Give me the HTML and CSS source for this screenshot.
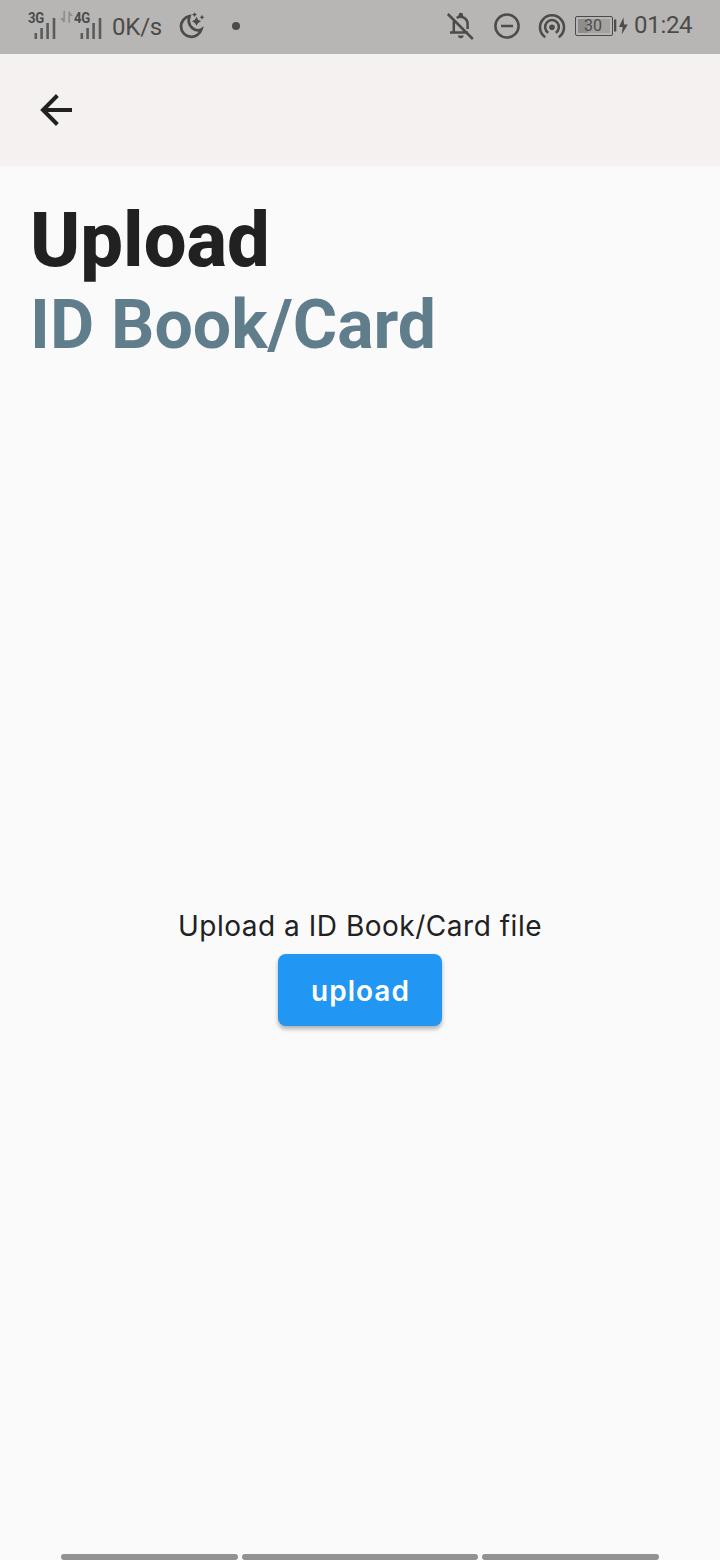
FILE: index.html
```html
<!DOCTYPE html>
<html lang="en">
<head>
<meta charset="utf-8">
<title>Upload ID Book/Card</title>
<link rel="stylesheet" href="styles.css">
</head>
<body>
<header class="status">
  <div class="status-group">
    <div class="signal signal-first">
      <span class="net">3G</span>
      <svg class="bars" width="22" height="24" viewBox="0 0 22 24"><path d="M1.8 17v6M7.6 12v11M13.6 7v16M20 2v21"/></svg>
    </div>
    <svg class="traffic" width="13" height="14" viewBox="0 0 13 14"><path d="M4.2 1v11M9.2 13V2"/><path class="solid" d="M0 8h4v5zM13 6H9V1z"/></svg>
    <div class="signal">
      <span class="net">4G</span>
      <svg class="bars" width="22" height="24" viewBox="0 0 22 24"><path d="M1.8 17v6M7.6 12v11M13.6 7v16M20 2v21"/></svg>
    </div>
    <span class="speed">0K/s</span>
    <svg class="moon" width="28" height="28" viewBox="0 0 28 28"><path class="line" d="M10.5 4.2A10.4 10.4 0 1 0 22.4 17.4C17 20.6 7.1 14.5 10.5 4.2Z"/><path class="solid" d="M17.5 4.8l1.6 2.9 3 1.6-3 1.6-1.6 2.9-1.6-2.9-3-1.6 3-1.6zM15.5.3l.9 1.5 1.6.8-1.6.8-.9 1.5-.9-1.5-1.6-.8 1.6-.8zM23 2.8l.9 1.7 1.6.8-1.6.8-.9 1.7-.9-1.7-1.6-.8 1.6-.8z"/></svg>
    <span class="dot"></span>
  </div>
  <div class="status-group">
    <svg class="bell" width="28" height="28" viewBox="0 0 28 28"><path class="line" d="M7.8 9.2v11.4H22M4 20.6h5M10.7 6C15 3 21.6 6 21.6 12v5M1.8 2l25 25"/><path class="solid" d="M12.5 4.6V3a2.3 2.3 0 0 1 4.6 0v1.6zM12 23.6h5.6a2.8 2.6 0 0 1-5.6 0z"/></svg>
    <svg class="dnd" width="26" height="26" viewBox="0 0 26 26"><circle class="line" cx="13" cy="13" r="11.6"/><path class="line" d="M7 13h12"/></svg>
    <svg class="hotspot" width="28" height="28" viewBox="0 0 28 28"><path class="line" d="M7.2 24.2A12 12 0 1 1 20.8 24.2M10.3 19.8a6.9 6.9 0 1 1 7.4 0"/><circle class="solid" cx="14" cy="14.2" r="2.8"/></svg>
    <div class="battery"><span>30</span></div>
    <svg class="bolt" width="14" height="20" viewBox="0 0 14 20"><path class="solid" d="M0 3.5h2.3v12H0zM9.5 1.5L5 11h3.7l-1 7.5L13.8 8.5H10z"/></svg>
    <span class="time">01:24</span>
  </div>
</header>
<nav class="appbar">
  <svg width="34" height="34" viewBox="0 0 34 34"><path d="M33 17H4M18.4 2.5L4 17 18.4 31.5"/></svg>
</nav>
<main class="page">
  <h1 class="title">Upload</h1>
  <h2 class="subtitle">ID Book/Card</h2>
  <section class="upload">
    <p class="prompt">Upload a ID Book/Card file</p>
    <button class="button">upload</button>
  </section>
</main>
<footer class="navhint"><i></i><i></i><i></i></footer>
</body>
</html>
```
FILE: styles.css
```css
* { box-sizing: border-box; }
body {
  margin: 0;
  width: 720px;
  height: 1560px;
  display: flex;
  flex-direction: column;
  overflow: hidden;
  background: #fafafa;
  color: #212121;
  font-family: Roboto, sans-serif;
}
svg { display: block; flex: none; }
.status {
  height: 54px;
  padding: 0 28px;
  display: flex;
  justify-content: space-between;
  background: #b7b6b4;
  color: #4c4b4b;
}
.status-group { display: flex; align-items: center; height: 52px; }
.line { fill: none; stroke: #4c4b4b; stroke-width: 2.5; }
.moon .line { stroke-width: 2.8; }
.solid { fill: #4c4b4b; }
.signal { width: 28px; height: 28px; display: grid; }
.net {
  grid-area: 1 / 1;
  font: 700 15.5px/15px Roboto, sans-serif;
  letter-spacing: -0.5px;
  transform: scaleX(.85);
  transform-origin: left;
  align-self: start;
  margin-top: -1px;
  height: 15px;
}
.bars { grid-area: 1 / 1; align-self: end; margin-left: 6px; stroke: #5c5b5b; stroke-width: 2.6; }
.traffic { margin: -18px 1px 0 4px; opacity: .35; stroke: #4c4b4b; stroke-width: 1.8; }
.traffic .solid { stroke: none; }
.speed { margin-left: 10px; width: 50px; font-size: 24px; line-height: 28px; letter-spacing: -.2px; padding-top: 1px; white-space: nowrap; }
.moon { margin-left: 17px; }
.dot { width: 8px; height: 8px; margin-left: 25px; border-radius: 50%; background: #4c4b4b; }
.dnd { margin-left: 20px; }
.hotspot { margin-left: 18px; margin-top: 2px; }
.battery {
  width: 38px;
  height: 20px;
  margin-left: 9px;
  padding-right: 2px;
  border: 1.5px solid #4c4b4b;
  border-radius: 2px;
  background: linear-gradient(90deg, #8e8d8c 0 10px, #a3a2a1 10px) 2px 2px / 32px 14px no-repeat;
  background-color: #b7b6b4;
  font-size: 16px;
  line-height: 18px;
  text-align: center;
}
.bolt { margin-left: 1px; }
.time { margin-left: 6px; width: 58px; font-size: 24px; line-height: 28px; letter-spacing: -.3px; white-space: nowrap; margin-top: -2px; }
.appbar { height: 112px; padding: 39px; background: #f5f1f0; }
.appbar path { fill: none; stroke: #212121; stroke-width: 4; }
.page { flex: 1; display: flex; flex-direction: column; padding: 30px 32px 0 30px; }
.title { margin: 0; font-size: 76px; line-height: 88px; font-weight: 800; }
.subtitle { margin: 1px 0 0; font-size: 68px; line-height: 80px; font-weight: 700; color: #607d8b; }
.upload { margin: 544px 0 0 2px; display: flex; flex-direction: column; align-items: center; }
.prompt { margin: 0; font: 400 28px/34px Inter, sans-serif; letter-spacing: .52px; white-space: nowrap; }
.button {
  width: 164px;
  height: 72px;
  margin-top: 11px;
  border: 0;
  border-radius: 8px;
  padding: 2px 0 0;
  background: #2196f3;
  color: #fff;
  font: 600 28px/34px Inter, sans-serif;
  letter-spacing: 1px;
  text-indent: 1px;
  box-shadow: 0 3px 4px rgba(0,0,0,.3);
}
.navhint { height: 6px; display: grid; grid-template-columns: 177px 236px 177px; gap: 4px; padding-left: 61px; }
.navhint i { background: #929292; border-radius: 3px; }
```
